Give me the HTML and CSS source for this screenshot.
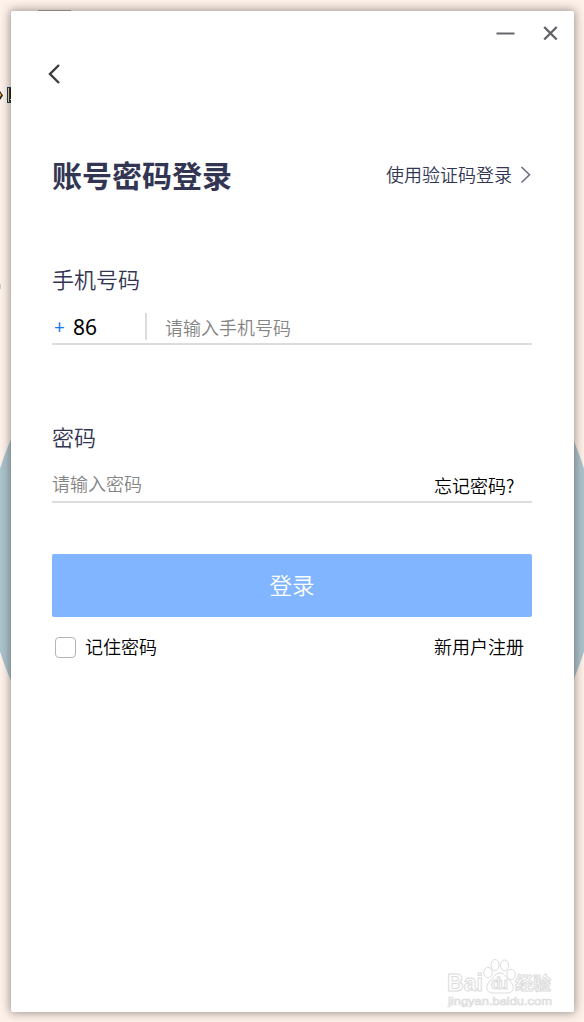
FILE: index.html
```
<!DOCTYPE html>
<html lang="zh-CN">
<head>
<meta charset="utf-8">
<title>账号密码登录</title>
<link rel="stylesheet" href="styles.css">
</head>
<body>
<div class="desktop">
  <div class="disc"></div>
  <svg class="bits" width="72" height="300" viewBox="0 0 72 300">
    <path d="M0 91l3 4.500l-3 4.500z" fill="#222"/><path d="M0 93l1.500 2l-1.500 2z" fill="#f5a623"/>
    <rect x="7" y="87" width="6" height="16" fill="#173a56"/><rect x="8" y="88" width="1" height="14" fill="#f2dc80"/>
    <rect x="10" y="88" width="2" height="13" fill="#35090b"/><rect x="10" y="99" width="2" height="1" fill="#fff"/>
    <rect x="0" y="284" width="1" height="5" fill="#cfc9c6"/>
    <rect x="38" y="10" width="33" height="1" fill="#a9a2a0"/>
  </svg>
  <main class="window">
    <header class="titlebar">
      <svg width="22" height="22" viewBox="0 0 22 22"><path d="M1.500 11.500h18" stroke="#66666b" stroke-width="2"/></svg>
      <svg width="22" height="22" viewBox="0 0 22 22"><path d="M4.200 5L16.700 17.500M16.700 5L4.200 17.500" stroke="#626267" stroke-width="2.400"/></svg>
    </header>
    <nav class="back"><svg width="16" height="24" viewBox="0 0 16 24"><path d="M12 3L3 12l9 9" fill="none" stroke="#3c3c3c" stroke-width="2.400"/></svg></nav>
    <div class="heading">
      <h1 class="title">账号密码登录</h1>
      <a class="switch">使用验证码登录<svg width="12" height="20" viewBox="0 0 12 20"><path d="M1.500 3l8 7.700l-8 7.800" fill="none" stroke="#6c6e81" stroke-width="1.600"/></svg></a>
    </div>
    <form class="form">
      <label class="label">手机号码</label>
      <div class="field phone">
        <span class="plus">+</span><span class="code">86</span>
        <span class="divider"></span>
        <span class="hint">请输入手机号码</span>
      </div>
      <label class="label second">密码</label>
      <div class="field password">
        <span class="hint">请输入密码</span>
        <a class="forgot">忘记密码?</a>
      </div>
      <div class="submit">登录</div>
      <div class="options">
        <span class="check"></span><span class="option-text">记住密码</span>
        <a class="register option-text">新用户注册</a>
      </div>
    </form>
    <footer class="mark">
      <svg width="112" height="54" viewBox="0 0 112 54" fill="#fff" stroke="#dcdcdc" stroke-width="1">
        <ellipse cx="41" cy="16.500" rx="4.200" ry="5.200"/><ellipse cx="48" cy="9" rx="4" ry="5.500"/><ellipse cx="57.500" cy="9.500" rx="4" ry="5.500"/><ellipse cx="64" cy="18.500" rx="4.200" ry="5.200"/>
        <path d="M53 17c-5 0-6 4-9 7c-6 5-6 13 2 13h14c8 0 8-8 2-13c-4-3-4-7-9-7z"/>
        <g class="brand"><text x="0" y="35" textLength="36" lengthAdjust="spacingAndGlyphs">Bai</text><text class="du" x="44" y="33" textLength="17">du</text><text class="exp" x="68" y="34" textLength="36">经验</text><text class="site" x="1" y="49" textLength="104" lengthAdjust="spacingAndGlyphs">jingyan.baidu.com</text></g>
      </svg>
    </footer>
  </main>
</div>
</body>
</html>
```
FILE: styles.css
```
* { box-sizing: border-box; }
body {
  margin: 0;
  font-family: "Noto Sans CJK SC", sans-serif;
  font-weight: 350;
  color: #000;
}
.desktop {
  position: relative;
  width: 584px;
  height: 1022px;
  padding: 11px 10px 10px 11px;
  overflow: hidden;
  background: #fdf1ea;
}
.disc {
  position: absolute;
  left: -14px;
  top: 254px;
  width: 612px;
  height: 612px;
  border-radius: 50%;
  background: #abc3cb;
}
.bits { position: absolute; left: 0; top: 0; }
.window {
  position: relative;
  display: flex;
  flex-direction: column;
  height: 1001px;
  padding: 0 42px 0 41px;
  border-radius: 2px;
  background: #fff;
  box-shadow: 0 0 10px 1px rgba(50, 40, 40, .48);
}
.titlebar {
  display: flex;
  justify-content: flex-end;
  gap: 23px;
  height: 48px;
  padding-top: 11px;
  margin-right: -30px;
}
.back { height: 32px; padding-top: 3px; margin-left: -5px; }
.back svg { display: block; }
.heading {
  display: flex;
  justify-content: space-between;
  align-items: center;
  height: 50px;
  margin-top: 58px;
}
.title {
  margin: 0;
  font-size: 30px;
  line-height: 44px;
  font-weight: 700;
  color: #333653;
}
.switch {
  display: flex;
  align-items: center;
  gap: 8px;
  font-size: 18px;
  line-height: 26px;
  color: #333653;
}
.form { display: flex; flex-direction: column; margin-top: 62px; }
.label { height: 36px; font-size: 22px; line-height: 34px; color: #333653; }
.field {
  display: flex;
  align-items: center;
  border-bottom: 2px solid #dcdcdc;
  font-size: 18px;
}
.phone { height: 48px; }
.plus { width: 21px; padding-left: 2px; font: 400 19px "Noto Sans", sans-serif; color: #1677f0; margin-top: 14px; }
.code { width: 72px; font: 400 21px "Noto Sans", sans-serif; margin-top: 13px; }
.divider { width: 2px; height: 27px; margin: 12px 18px 0 0; background: #dcdcdc; }
.hint { color: #858585; line-height: 26px; margin-top: 13px; }
.second { margin-top: 74px; }
.password { height: 48px; justify-content: space-between; }
.password .hint { margin-top: 9px; }
.forgot { width: 98px; margin-top: 14px; line-height: 26px; }
.submit {
  height: 63px;
  margin-top: 51px;
  border-radius: 2px;
  background: #81b5ff;
  color: #fff;
  font-size: 22.5px;
  line-height: 60px;
  text-align: center;
}
.options {
  display: flex;
  align-items: center;
  height: 30px;
  margin-top: 15px;
  padding-left: 3px;
  font-size: 18px;
}
.check { width: 21px; height: 21px; margin-right: 9px; border: 1px solid #b4b4b4; border-radius: 4px; }
.option-text { line-height: 26px; padding-bottom: 2px; }
.register { width: 98px; margin-left: auto; }
.mark { height: 54px; margin: auto -27px 2px auto; }
.mark svg { display: block; }
.brand { font: 700 23px "Liberation Sans", "Noto Sans CJK SC", sans-serif; }
.du { font-size: 16px; }
.exp { font-size: 18px; }
.site { font-size: 11px; font-weight: 400; stroke-width: .7px; }
```
